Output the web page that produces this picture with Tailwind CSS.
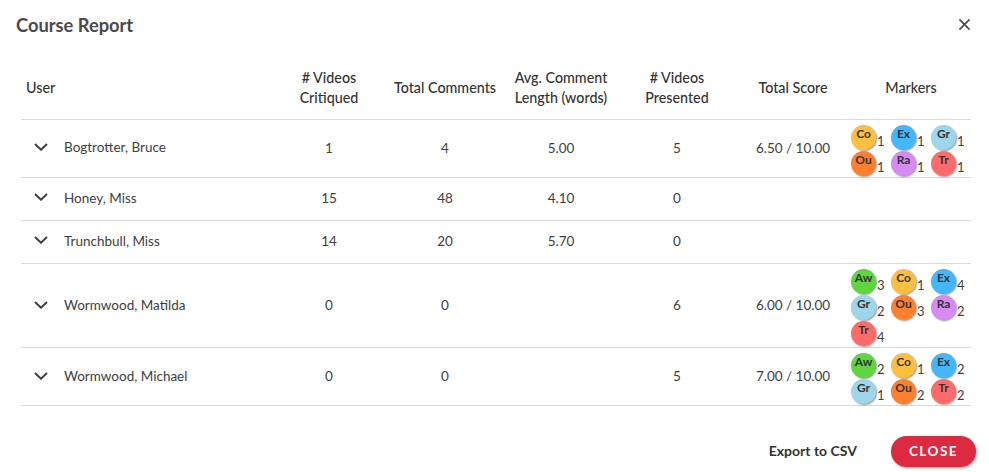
<!DOCTYPE html>
<html><head><meta charset="utf-8"><script src="https://cdn.jsdelivr.net/npm/@tailwindcss/browser@4"></script></head>
<body class="bg-white">
<div class="w-[989px] h-[472px] overflow-hidden relative font-['Lato','Open_Sans',sans-serif] text-[#404040]">
  <header class="h-[60px] pl-4 pr-[18px] flex items-start justify-between">
    <h1 class="mt-[13px] text-[18.3px] leading-[24px] font-bold text-[#4a4a4a]">Course Report</h1>
    <svg class="mt-[18px]" width="13" height="13" viewBox="0 0 14 14"><path d="M1.5 1.5L12.5 12.5M12.5 1.5L1.5 12.5" stroke="#4a4a4a" stroke-width="1.7" fill="none"/></svg>
  </header>
  <div class="mx-[21px] w-[950px] text-[13.5px]">
    <div class="grid grid-cols-[250px_116px_116px_116px_116px_116px_120px] h-[60px] items-center text-center text-[14.3px] leading-[20px] pb-[4px] font-medium text-[#333] border-b border-[#d9d9d9]">
      <div class="text-left pl-[5px]">User</div><div>#&nbsp;Videos<br>Critiqued</div><div>Total Comments</div><div>Avg. Comment<br>Length (words)</div><div># Videos<br>Presented</div><div>Total Score</div><div>Markers</div>
    </div>

    <div class="grid grid-cols-[250px_116px_116px_116px_116px_116px_120px] h-[58px] items-center text-center border-b border-[#d9d9d9]">
      <div class="flex items-center text-left pb-[2px]"><svg class="ml-[13px] mr-[16px] -mt-[2px]" width="14" height="8" viewBox="0 0 14 8"><path d="M1 1L7 6.7L13 1" stroke="#404040" stroke-width="2" fill="none"/></svg>Bogtrotter, Bruce</div><div>1</div><div>4</div><div>5.00</div><div>5</div><div>6.50 / 10.00</div>
      <div class="self-start pt-[5px] grid grid-cols-[40px_40px_40px] auto-rows-[26px] text-left text-[13px]">
        <div class="flex"><span class="w-[25px] h-[25px] rounded-full bg-[#fdbf3f] shadow-[1px_1px_2px_#999] flex justify-center pt-[2px] text-[12px] leading-[14px] font-bold text-[#333]">Co</span><span class="mt-[9px] ml-[1px] leading-[15px]">1</span></div>
        <div class="flex"><span class="w-[25px] h-[25px] rounded-full bg-[#44b6fa] shadow-[1px_1px_2px_#999] flex justify-center pt-[2px] text-[12px] leading-[14px] font-bold text-[#333]">Ex</span><span class="mt-[9px] ml-[1px] leading-[15px]">1</span></div>
        <div class="flex"><span class="w-[25px] h-[25px] rounded-full bg-[#9dd5ea] shadow-[1px_1px_2px_#999] flex justify-center pt-[2px] text-[12px] leading-[14px] font-bold text-[#333]">Gr</span><span class="mt-[9px] ml-[1px] leading-[15px]">1</span></div>
        <div class="flex"><span class="w-[25px] h-[25px] rounded-full bg-[#fe7f2d] shadow-[1px_1px_2px_#999] flex justify-center pt-[2px] text-[12px] leading-[14px] font-bold text-[#333]">Ou</span><span class="mt-[9px] ml-[1px] leading-[15px]">1</span></div>
        <div class="flex"><span class="w-[25px] h-[25px] rounded-full bg-[#d68af2] shadow-[1px_1px_2px_#999] flex justify-center pt-[2px] text-[12px] leading-[14px] font-bold text-[#333]">Ra</span><span class="mt-[9px] ml-[1px] leading-[15px]">1</span></div>
        <div class="flex"><span class="w-[25px] h-[25px] rounded-full bg-[#ff6b6b] shadow-[1px_1px_2px_#999] flex justify-center pt-[2px] text-[12px] leading-[14px] font-bold text-[#333]">Tr</span><span class="mt-[9px] ml-[1px] leading-[15px]">1</span></div>
      </div>
    </div>

    <div class="grid grid-cols-[250px_116px_116px_116px_116px_116px_120px] h-[43px] pb-[2px] items-center text-center border-b border-[#d9d9d9]">
      <div class="flex items-center text-left"><svg class="ml-[13px] mr-[16px] -mt-[2px]" width="14" height="8" viewBox="0 0 14 8"><path d="M1 1L7 6.7L13 1" stroke="#404040" stroke-width="2" fill="none"/></svg>Honey, Miss</div><div>15</div><div>48</div><div>4.10</div><div>0</div><div></div><div></div>
    </div>
    <div class="grid grid-cols-[250px_116px_116px_116px_116px_116px_120px] h-[43px] pb-[2px] items-center text-center border-b border-[#d9d9d9]">
      <div class="flex items-center text-left"><svg class="ml-[13px] mr-[16px] -mt-[2px]" width="14" height="8" viewBox="0 0 14 8"><path d="M1 1L7 6.7L13 1" stroke="#404040" stroke-width="2" fill="none"/></svg>Trunchbull, Miss</div><div>14</div><div>20</div><div>5.70</div><div>0</div><div></div><div></div>
    </div>

    <div class="grid grid-cols-[250px_116px_116px_116px_116px_116px_120px] h-[84px] items-center text-center border-b border-[#d9d9d9]">
      <div class="flex items-center text-left"><svg class="ml-[13px] mr-[16px] -mt-[2px]" width="14" height="8" viewBox="0 0 14 8"><path d="M1 1L7 6.7L13 1" stroke="#404040" stroke-width="2" fill="none"/></svg>Wormwood, Matilda</div><div>0</div><div>0</div><div></div><div>6</div><div>6.00 / 10.00</div>
      <div class="self-start pt-[5px] grid grid-cols-[40px_40px_40px] auto-rows-[26px] text-left text-[13px]">
        <div class="flex"><span class="w-[25px] h-[25px] rounded-full bg-[#5fd63f] shadow-[1px_1px_2px_#999] flex justify-center pt-[2px] text-[12px] leading-[14px] font-bold text-[#333]">Aw</span><span class="mt-[9px] ml-[1px] leading-[15px]">3</span></div>
        <div class="flex"><span class="w-[25px] h-[25px] rounded-full bg-[#fdbf3f] shadow-[1px_1px_2px_#999] flex justify-center pt-[2px] text-[12px] leading-[14px] font-bold text-[#333]">Co</span><span class="mt-[9px] ml-[1px] leading-[15px]">1</span></div>
        <div class="flex"><span class="w-[25px] h-[25px] rounded-full bg-[#44b6fa] shadow-[1px_1px_2px_#999] flex justify-center pt-[2px] text-[12px] leading-[14px] font-bold text-[#333]">Ex</span><span class="mt-[9px] ml-[1px] leading-[15px]">4</span></div>
        <div class="flex"><span class="w-[25px] h-[25px] rounded-full bg-[#9dd5ea] shadow-[1px_1px_2px_#999] flex justify-center pt-[2px] text-[12px] leading-[14px] font-bold text-[#333]">Gr</span><span class="mt-[9px] ml-[1px] leading-[15px]">2</span></div>
        <div class="flex"><span class="w-[25px] h-[25px] rounded-full bg-[#fe7f2d] shadow-[1px_1px_2px_#999] flex justify-center pt-[2px] text-[12px] leading-[14px] font-bold text-[#333]">Ou</span><span class="mt-[9px] ml-[1px] leading-[15px]">3</span></div>
        <div class="flex"><span class="w-[25px] h-[25px] rounded-full bg-[#d68af2] shadow-[1px_1px_2px_#999] flex justify-center pt-[2px] text-[12px] leading-[14px] font-bold text-[#333]">Ra</span><span class="mt-[9px] ml-[1px] leading-[15px]">2</span></div>
        <div class="flex"><span class="w-[25px] h-[25px] rounded-full bg-[#ff6b6b] shadow-[1px_1px_2px_#999] flex justify-center pt-[2px] text-[12px] leading-[14px] font-bold text-[#333]">Tr</span><span class="mt-[9px] ml-[1px] leading-[15px]">4</span></div>
      </div>
    </div>

    <div class="grid grid-cols-[250px_116px_116px_116px_116px_116px_120px] h-[58px] items-center text-center border-b border-[#d9d9d9]">
      <div class="flex items-center text-left"><svg class="ml-[13px] mr-[16px] -mt-[2px]" width="14" height="8" viewBox="0 0 14 8"><path d="M1 1L7 6.7L13 1" stroke="#404040" stroke-width="2" fill="none"/></svg>Wormwood, Michael</div><div>0</div><div>0</div><div></div><div>5</div><div>7.00 / 10.00</div>
      <div class="self-start pt-[5px] grid grid-cols-[40px_40px_40px] auto-rows-[26px] text-left text-[13px]">
        <div class="flex"><span class="w-[25px] h-[25px] rounded-full bg-[#5fd63f] shadow-[1px_1px_2px_#999] flex justify-center pt-[2px] text-[12px] leading-[14px] font-bold text-[#333]">Aw</span><span class="mt-[9px] ml-[1px] leading-[15px]">2</span></div>
        <div class="flex"><span class="w-[25px] h-[25px] rounded-full bg-[#fdbf3f] shadow-[1px_1px_2px_#999] flex justify-center pt-[2px] text-[12px] leading-[14px] font-bold text-[#333]">Co</span><span class="mt-[9px] ml-[1px] leading-[15px]">1</span></div>
        <div class="flex"><span class="w-[25px] h-[25px] rounded-full bg-[#44b6fa] shadow-[1px_1px_2px_#999] flex justify-center pt-[2px] text-[12px] leading-[14px] font-bold text-[#333]">Ex</span><span class="mt-[9px] ml-[1px] leading-[15px]">2</span></div>
        <div class="flex"><span class="w-[25px] h-[25px] rounded-full bg-[#9dd5ea] shadow-[1px_1px_2px_#999] flex justify-center pt-[2px] text-[12px] leading-[14px] font-bold text-[#333]">Gr</span><span class="mt-[9px] ml-[1px] leading-[15px]">1</span></div>
        <div class="flex"><span class="w-[25px] h-[25px] rounded-full bg-[#fe7f2d] shadow-[1px_1px_2px_#999] flex justify-center pt-[2px] text-[12px] leading-[14px] font-bold text-[#333]">Ou</span><span class="mt-[9px] ml-[1px] leading-[15px]">2</span></div>
        <div class="flex"><span class="w-[25px] h-[25px] rounded-full bg-[#ff6b6b] shadow-[1px_1px_2px_#999] flex justify-center pt-[2px] text-[12px] leading-[14px] font-bold text-[#333]">Tr</span><span class="mt-[9px] ml-[1px] leading-[15px]">2</span></div>
      </div>
    </div>
  </div>
  <footer class="mt-[30px] pr-[13px] flex items-center justify-end">
    <span class="text-[14px] leading-[18px] pb-[2px] font-bold text-[#333] mr-[34px]">Export to CSV</span>
    <button class="w-[85px] h-[31px] rounded-full bg-[#dc2a41] shadow-[1px_1px_3px_rgba(0,0,0,.3)] text-white text-[13.5px] font-bold tracking-[1.5px]">CLOSE</button>
  </footer>
</div>
</body></html>
